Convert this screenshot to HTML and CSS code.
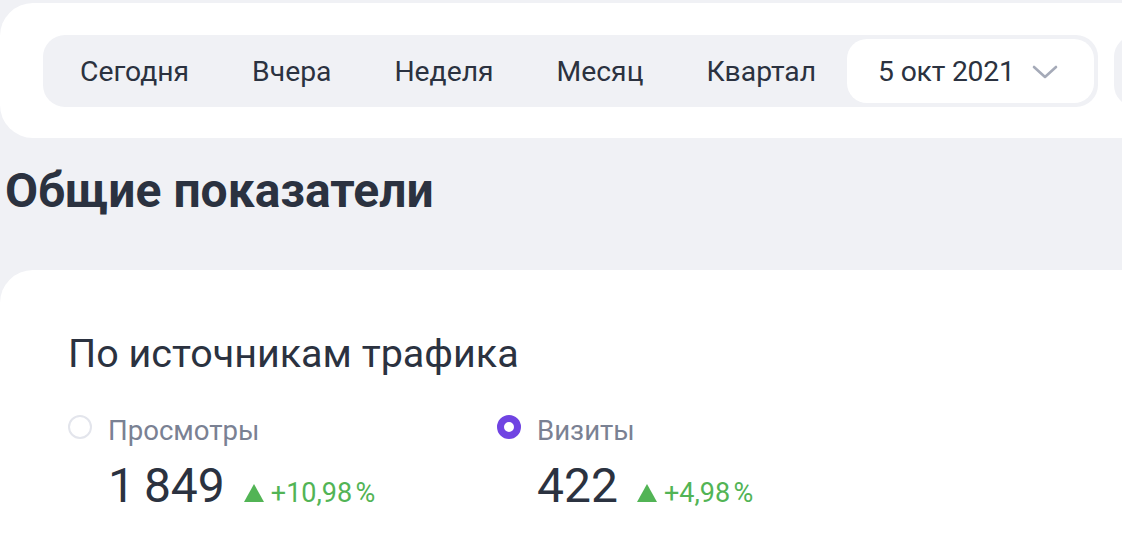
FILE: index.html
```html
<!DOCTYPE html>
<html lang="ru">
<head>
<meta charset="utf-8">
<title>Общие показатели</title>
<link rel="stylesheet" href="styles.css">
</head>
<body>
<div class="topcard">
  <div class="bar">
    <div class="item">Сегодня</div>
    <div class="item">Вчера</div>
    <div class="item">Неделя</div>
    <div class="item">Месяц</div>
    <div class="item">Квартал</div>
    <div class="item pill">5 окт 2021
      <svg class="chev" width="26" height="16" viewBox="0 0 26 16"><path d="M2 3 L13 13 L24 3" fill="none" stroke="#a5aab8" stroke-width="2.6" stroke-linecap="round" stroke-linejoin="round"/></svg>
    </div>
  </div>
  <div class="bar bar2"></div>
</div>
<h1 class="title">Общие показатели</h1>
<div class="card">
  <h2 class="subtitle">По источникам трафика</h2>
  <div class="metrics">
    <div class="metric">
      <div class="mhead"><span class="radio"></span><span class="mlabel">Просмотры</span></div>
      <div class="mvalue"><span class="num">1 849</span><span class="delta"><span class="tri"></span>+10,98&#8239;%</span></div>
    </div>
    <div class="metric">
      <div class="mhead"><span class="radio on"></span><span class="mlabel">Визиты</span></div>
      <div class="mvalue"><span class="num">422</span><span class="delta"><span class="tri"></span>+4,98&#8239;%</span></div>
    </div>
  </div>
</div>
</body>
</html>
```
FILE: styles.css
```css
html, body { margin: 0; padding: 0; }
body {
  background: #f0f1f5;
  font-family: Roboto, "Noto Sans", sans-serif;
  color: #2b3240;
  overflow: hidden;
  width: 1122px;
  height: 548px;
}
.topcard {
  margin-top: 3px;
  height: 135px;
  box-sizing: border-box;
  background: #fff;
  border-radius: 33px 0 0 33px;
  padding: 32px 0 0 43px;
  display: flex;
  gap: 16px;
  white-space: nowrap;
}
.bar {
  display: flex;
  background: #f0f1f5;
  border-radius: 22px;
  padding: 4px;
  height: 72px;
  box-sizing: border-box;
  flex: none;
}
.bar2 { width: 200px; }
.item {
  display: flex;
  align-items: center;
  padding: 0 31px 0 32px;
  font-size: 28.3px;
}
.item:first-child { padding-left: 33px; }
.pill {
  background: #fff;
  border-radius: 20px;
  padding: 0 36px 0 31px;
  gap: 17px;
  letter-spacing: -0.2px;
}
.chev { display: block; margin-top: 2px; }
.title {
  margin: 0;
  padding: 25px 0 0 5px;
  height: 132px;
  box-sizing: border-box;
  font-size: 48px;
  font-weight: 700;
  line-height: 56px;
}
.card {
  background: #fff;
  border-radius: 33px 0 0 0;
  padding: 62px 0 0 68px;
  height: 400px;
}
.subtitle {
  margin: 0;
  font-size: 39.5px;
  font-weight: 400;
  line-height: 44px;
}
.metrics {
  display: flex;
  margin-top: 40px;
}
.metric { width: 429px; }
.mhead {
  display: flex;
  align-items: flex-start;
  gap: 16px;
  height: 30px;
}
.radio {
  width: 24px;
  height: 24px;
  margin-top: -1px;
  box-sizing: border-box;
  border-radius: 50%;
  border: 2px solid #e3e5ec;
  flex: none;
}
.radio.on {
  border: 7px solid #7044e2;
}
.mlabel {
  font-size: 27.6px;
  line-height: 30px;
  color: #7a8193;
}
.mvalue {
  display: flex;
  align-items: baseline;
  padding-left: 40px;
  margin-top: 12px;
}
.num {
  font-size: 48px;
  line-height: 56px;
  word-spacing: -3px;
}
.delta {
  display: flex;
  align-items: baseline;
  margin-left: 19px;
  font-size: 27px;
  letter-spacing: 2.3px;
  white-space: nowrap;
  color: #52b455;
}
.tri {
  width: 0;
  height: 0;
  border-left: 10px solid transparent;
  border-right: 10px solid transparent;
  border-bottom: 18px solid #52b455;
  margin-right: 7px;
}
```
